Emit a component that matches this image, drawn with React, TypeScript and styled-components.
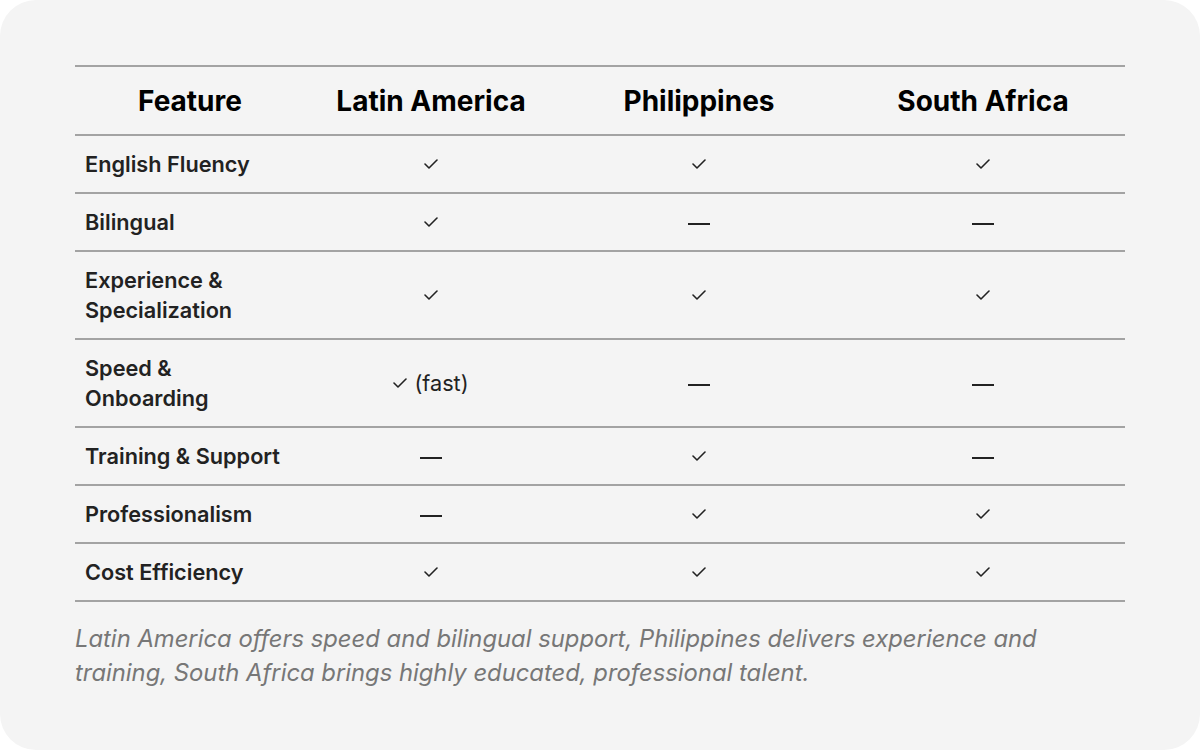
import React from "react";
import styled, { createGlobalStyle } from "styled-components";

const Global = createGlobalStyle`
  html, body { margin: 0; padding: 0; background: #ffffff; }
  * { box-sizing: border-box; }
`;

const Card = styled.div`
  width: 1200px;
  height: 750px;
  background: #f4f4f4;
  border-radius: 36px;
  padding: 65px 75px 0 75px;
  font-family: Inter, "Noto Sans", sans-serif;
`;

const Table = styled.table`
  width: 1050px;
  border-collapse: collapse;
  table-layout: fixed;
`;

const HeadCell = styled.th<{ $w: number }>`
  width: ${(p) => p.$w}px;
  font-size: 28px;
  font-weight: 700;
  color: #000;
  text-align: center;
  padding: 19px 8px 18px;
  line-height: 30px;
  border-top: 2px solid #a3a3a3;
  border-bottom: 2px solid #a3a3a3;
`;

const Row = styled.tr`
  border-bottom: 2px solid #a3a3a3;
`;

const FeatureCell = styled.td`
  font-size: 21.7px;
  font-weight: 600;
  color: #222;
  text-align: left;
  padding: 13px 10px;
  line-height: 30px;
  vertical-align: middle;
`;

const ValueCell = styled.td`
  font-size: 21.7px;
  font-weight: 400;
  color: #222;
  text-align: center;
  padding: 13px 10px;
  line-height: 30px;
  vertical-align: middle;
`;

const Dash = styled.span`
  display: inline-block;
  width: 22px;
  height: 2px;
  background: #222;
  vertical-align: middle;
`;

const CheckSvg = styled.svg`
  width: 14px;
  height: 10px;
  vertical-align: middle;
  position: relative;
  top: -2px;
`;

const Note = styled.span`
  margin-left: 7px;
`;

const Caption = styled.p`
  margin: 20px 0 0;
  font-size: 23.8px;
  line-height: 34px;
  font-style: italic;
  color: #777;
  width: 1050px;
`;

const Check = () => (
  <CheckSvg viewBox="0 0 14 10">
    <polyline points="1,5 5,9 13,1" fill="none" stroke="#222" strokeWidth="1.6" strokeLinecap="round" strokeLinejoin="round" />
  </CheckSvg>
);

type V = "y" | "n" | "fast";

const rows: { f: string; v: V[] }[] = [
  { f: "English Fluency", v: ["y", "y", "y"] },
  { f: "Bilingual", v: ["y", "n", "n"] },
  { f: "Experience & Specialization", v: ["y", "y", "y"] },
  { f: "Speed & Onboarding", v: ["fast", "n", "n"] },
  { f: "Training & Support", v: ["n", "y", "n"] },
  { f: "Professionalism", v: ["n", "y", "y"] },
  { f: "Cost Efficiency", v: ["y", "y", "y"] },
];

const render = (v: V) => {
  if (v === "y") return <Check />;
  if (v === "n") return <Dash />;
  return (
    <>
      <Check />
      <Note>(fast)</Note>
    </>
  );
};

export default function App() {
  return (
    <>
      <Global />
      <Card>
        <Table>
          <thead>
            <tr>
              <HeadCell $w={230}>Feature</HeadCell>
              <HeadCell $w={252}>Latin America</HeadCell>
              <HeadCell $w={284}>Philippines</HeadCell>
              <HeadCell $w={284}>South Africa</HeadCell>
            </tr>
          </thead>
          <tbody>
            {rows.map((r) => (
              <Row key={r.f}>
                <FeatureCell>{r.f}</FeatureCell>
                {r.v.map((v, i) => (
                  <ValueCell key={i}>{render(v)}</ValueCell>
                ))}
              </Row>
            ))}
          </tbody>
        </Table>
        <Caption>
          Latin America offers speed and bilingual support, Philippines delivers experience and
          training, South Africa brings highly educated, professional talent.
        </Caption>
      </Card>
    </>
  );
}
